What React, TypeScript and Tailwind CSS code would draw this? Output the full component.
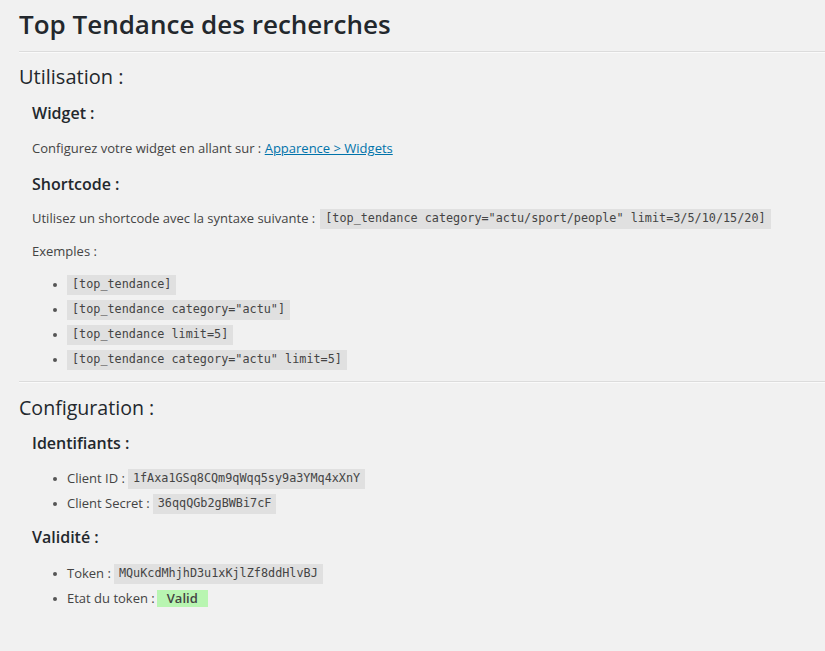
import React from 'react';

const Code: React.FC<{ children: React.ReactNode }> = ({ children }) => (
  <code className="inline-flex h-[20px] items-center bg-[#e0e0e0] px-[5px] font-['DejaVu_Sans_Mono',monospace] text-[11.8px] text-[#444]">
    {children}
  </code>
);

const Item: React.FC<{ children: React.ReactNode }> = ({ children }) => (
  <li className="flex h-[25px] items-center">
    <span className="mr-[10px] ml-[-14px] h-[4px] w-[4px] shrink-0 rounded-full bg-[#555]" />
    {children}
  </li>
);

export default function App() {
  return (
    <div className="min-h-[651px] w-full bg-[#f1f1f1] font-['Open_Sans',sans-serif] text-[13px] text-[#444]">
      <div className="pl-[19px]">
        <h1 className="pt-[8px] text-[26px] leading-[32px] font-semibold text-[#23282d]">Top Tendance des recherches</h1>
        <div className="mt-[11px] border-t border-b border-t-[#dcdcdc] border-b-[#fafafa]" />

        <h2 className="mt-[11px] text-[20px] leading-[26px] text-[#23282d]">Utilisation :</h2>
        <div className="pl-[13px]">
          <h3 className="mt-[12px] text-[16px] leading-[22px] font-semibold text-[#23282d]">Widget :</h3>
          <p className="mt-[14px] leading-[20px]">
            Configurez votre widget en allant sur :{' '}
            <a href="#" className="text-[#0073aa] underline">Apparence &gt; Widgets</a>
          </p>
          <h3 className="mt-[15px] text-[16px] leading-[22px] font-semibold text-[#23282d]">Shortcode :</h3>
          <p className="mt-[14px] flex h-[20px] items-center">
            <span className="mr-[5px]">Utilisez un shortcode avec la syntaxe suivante :</span>
            <Code>[top_tendance category="actu/sport/people" limit=3/5/10/15/20]</Code>
          </p>
          <p className="mt-[12px] leading-[20px]">Exemples :</p>
          <ul className="mt-[11.5px] pl-[35px]">
            <Item><Code>[top_tendance]</Code></Item>
            <Item><Code>[top_tendance category="actu"]</Code></Item>
            <Item><Code>[top_tendance limit=5]</Code></Item>
            <Item><Code>[top_tendance category="actu" limit=5]</Code></Item>
          </ul>
        </div>
        <div className="mt-[8px] border-t border-b border-t-[#dcdcdc] border-b-[#fafafa]" />

        <h2 className="mt-[12px] text-[19.6px] leading-[26px] text-[#23282d]">Configuration :</h2>
        <div className="pl-[13px]">
          <h3 className="mt-[11px] text-[16px] leading-[22px] font-semibold text-[#23282d]">Identifiants :</h3>
          <ul className="mt-[12.5px] pl-[35px]">
            <Item><span className="mr-[3px]">Client ID :</span><Code>1fAxa1GSq8CQm9qWqq5sy9a3YMq4xXnY</Code></Item>
            <Item><span className="mr-[3px]">Client Secret :</span><Code>36qqQGb2gBWBi7cF</Code></Item>
          </ul>
          <h3 className="mt-[9.5px] text-[16px] leading-[22px] font-semibold text-[#23282d]">Validité :</h3>
          <ul className="mt-[13.5px] pl-[35px]">
            <Item><span className="mr-[3px]">Token :</span><Code>MQuKcdMhjhD3u1xKjlZf8ddHlvBJ</Code></Item>
            <Item>
              <span className="mr-[2px]">Etat du token :</span>
              <span className="inline-flex h-[17px] items-center bg-[#b8f5b1] px-[10px] font-semibold text-[#444]">Valid</span>
            </Item>
          </ul>
        </div>
      </div>
    </div>
  );
}
